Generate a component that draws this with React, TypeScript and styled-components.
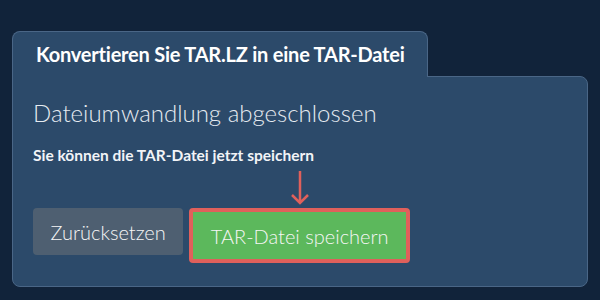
import React from "react";
import styled, { createGlobalStyle } from "styled-components";

const GlobalStyle = createGlobalStyle`
  html, body {
    margin: 0;
    padding: 0;
    background-color: #11233a;
  }
  body {
    font-family: Lato, "Open Sans", sans-serif;
    color: #fff;
  }
`;

const Page = styled.div`
  width: 600px;
  height: 300px;
  padding: 31px 12px 0;
  box-sizing: border-box;
`;

const Tab = styled.div`
  position: relative;
  z-index: 1;
  display: inline-flex;
  align-items: center;
  height: 46px;
  box-sizing: border-box;
  padding: 0 22px 2px 23px;
  margin-bottom: -1px;
  background-color: #2c4a6a;
  border: 1px solid #4a6686;
  border-bottom: none;
  border-radius: 8px 8px 0 0;

  h2 {
    margin: 0;
    font-size: 20px;
    font-weight: 700;
    color: #fff;
    letter-spacing: -0.22px;
  }
`;

const Panel = styled.section`
  height: 211px;
  box-sizing: border-box;
  padding: 21px 20px 0;
  background-color: #2c4a6a;
  border: 1px solid #4a6686;
  border-radius: 0 8px 8px 8px;

  h3 {
    margin: 0;
    font-size: 24px;
    font-weight: 300;
    line-height: 29px;
    color: #e6ebf1;
  }

  p {
    margin: 19px 0 0;
    font-size: 15.5px;
    line-height: 19px;
    font-weight: 700;
    color: #f2f4f7;
  }
`;

const Actions = styled.div`
  display: flex;
  align-items: flex-start;
  gap: 6px;
  margin-top: 43px;
`;

const Button = styled.button<{ $primary?: boolean }>`
  position: relative;
  height: ${(p) => (p.$primary ? "55px" : "47px")};
  padding: 0 17.5px;
  font-family: Lato, "Open Sans", sans-serif;
  font-size: 20px;
  font-weight: 300;
  color: #f6f6f6;
  background-color: ${(p) => (p.$primary ? "#5cb85c" : "#4e5f71")};
  border: ${(p) => (p.$primary ? "4px solid #e0605b" : "none")};
  border-radius: 4px;
  cursor: pointer;
`;

const Pointer = styled.svg`
  position: absolute;
  left: 50%;
  top: -42px;
  transform: translateX(-50%);
`;

export default function App() {
  return (
    <>
      <GlobalStyle />
      <Page>
        <Tab>
          <h2>Konvertieren Sie TAR.LZ in eine TAR-Datei</h2>
        </Tab>
        <Panel>
          <h3>Dateiumwandlung abgeschlossen</h3>
          <p>Sie können die TAR-Datei jetzt speichern</p>
          <Actions>
            <Button>Zurücksetzen</Button>
            <Button $primary>
              <Pointer width="20" height="36" viewBox="0 0 20 36">
                <path
                  d="M10 1 V33 M2 25 L10 33 L18 25"
                  fill="none"
                  stroke="#e0605b"
                  strokeWidth="2.5"
                />
              </Pointer>
              TAR-Datei speichern
            </Button>
          </Actions>
        </Panel>
      </Page>
    </>
  );
}
